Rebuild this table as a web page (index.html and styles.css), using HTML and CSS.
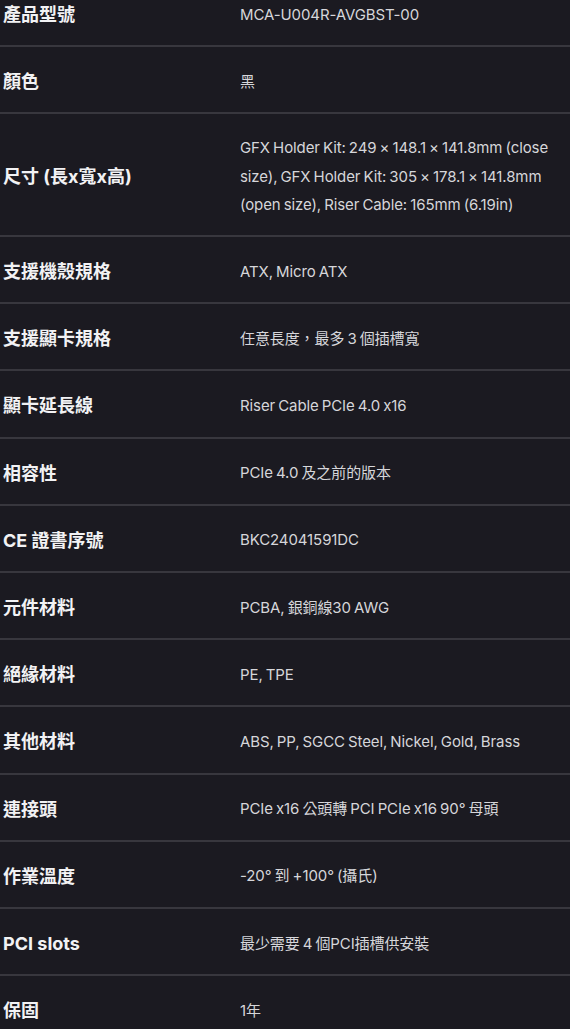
FILE: index.html
```html
<!DOCTYPE html>
<html lang="zh-Hant">
<head>
<meta charset="utf-8">
<link rel="stylesheet" href="styles.css">
</head>
<body>
<div class="specs">
  <div class="row"><div class="label">產品型號</div><div class="value">MCA-U004R-AVGBST-00</div></div>
  <div class="row"><div class="label">顏色</div><div class="value">黑</div></div>
  <div class="row"><div class="label">尺寸 (長x寬x高)</div><div class="value">GFX Holder Kit: 249 × 148.1 × 141.8mm (close size), GFX Holder Kit: 305 × 178.1 × 141.8mm (open size), Riser Cable: 165mm (6.19in)</div></div>
  <div class="row"><div class="label">支援機殼規格</div><div class="value">ATX, Micro ATX</div></div>
  <div class="row"><div class="label">支援顯卡規格</div><div class="value">任意長度，最多 3 個插槽寬</div></div>
  <div class="row"><div class="label">顯卡延長線</div><div class="value">Riser Cable PCIe 4.0 x16</div></div>
  <div class="row"><div class="label">相容性</div><div class="value">PCIe 4.0 及之前的版本</div></div>
  <div class="row"><div class="label">CE 證書序號</div><div class="value">BKC24041591DC</div></div>
  <div class="row"><div class="label">元件材料</div><div class="value">PCBA, 銀銅線30 AWG</div></div>
  <div class="row"><div class="label">絕緣材料</div><div class="value">PE, TPE</div></div>
  <div class="row"><div class="label">其他材料</div><div class="value">ABS, PP, SGCC Steel, Nickel, Gold, Brass</div></div>
  <div class="row"><div class="label">連接頭</div><div class="value">PCIe x16 公頭轉 PCI PCIe x16 90° 母頭</div></div>
  <div class="row"><div class="label">作業溫度</div><div class="value">-20° 到 +100° (攝氏)</div></div>
  <div class="row"><div class="label">PCI slots</div><div class="value">最少需要 4 個PCI插槽供安裝</div></div>
  <div class="row"><div class="label">保固</div><div class="value">1年</div></div>
</div>
</body>
</html>
```
FILE: styles.css
```css
html, body {
  margin: 0;
  padding: 0;
  background: #1b1a21;
}
body {
  font-family: Inter, "Noto Sans CJK TC", sans-serif;
  color: #e8e8ea;
  overflow: hidden;
}
.specs {
  margin-top: -20px;
}
.row {
  display: grid;
  grid-template-columns: 240px 1fr;
  align-items: center;
  padding: 20px 0 16px;
  border-bottom: 2px solid #38373e;
  min-height: 29.2px;
}
.label {
  padding-left: 3px;
  font-size: 18px;
  font-weight: 700;
  color: #f2f2f4;
  line-height: 29.2px;
}
.value {
  font-size: 15px;
  line-height: 28.2px;
  color: #d6d6da;
  padding-right: 10px;
  letter-spacing: -0.1px;
  word-spacing: -1px;
}
```
